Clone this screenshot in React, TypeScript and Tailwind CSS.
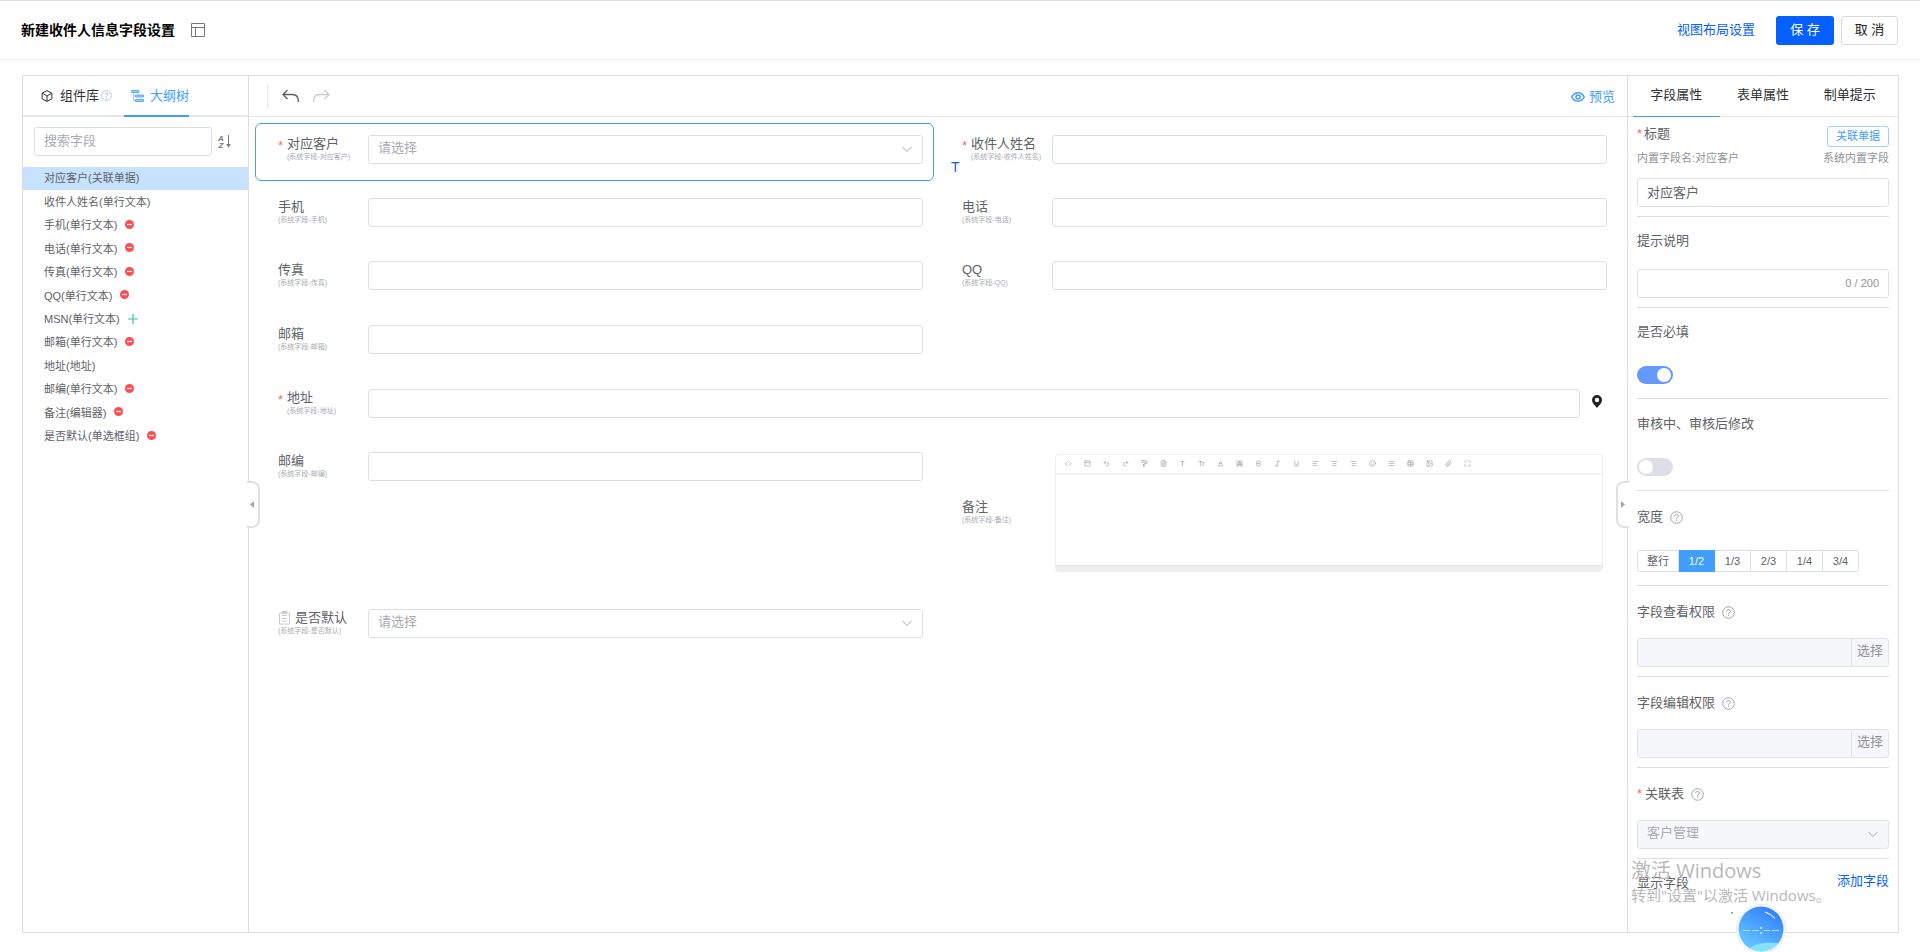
import { useState } from 'react';
import type { ReactNode } from 'react';
import {
  AlignCenter,
  AlignLeft,
  AlignRight,
  Baseline,
  Bold,
  Code,
  FileText,
  Image,
  Italic,
  Maximize,
  Menu,
  PaintRoller,
  PanelTop,
  Paperclip,
  Redo2,
  Smile,
  Table,
  Underline,
  Undo2,
} from 'lucide-react';

const treeItems = [
  { name: '对应客户(关联单据)' },
  { name: '收件人姓名(单行文本)' },
  { name: '手机(单行文本)', action: 'remove' },
  { name: '电话(单行文本)', action: 'remove' },
  { name: '传真(单行文本)', action: 'remove' },
  { name: 'QQ(单行文本)', action: 'remove' },
  { name: 'MSN(单行文本)', action: 'add' },
  { name: '邮箱(单行文本)', action: 'remove' },
  { name: '地址(地址)' },
  { name: '邮编(单行文本)', action: 'remove' },
  { name: '备注(编辑器)', action: 'remove' },
  { name: '是否默认(单选框组)', action: 'remove' },
];

const editorTools = [
  { name: '源码', Icon: Code },
  { name: '模板', Icon: PanelTop },
  { name: '撤销', Icon: Undo2 },
  { name: '重做', Icon: Redo2 },
  { name: '格式刷', Icon: PaintRoller },
  { name: '清除格式', Icon: FileText },
  { name: '字体', text: 'T' },
  { name: '字号', text: 'Tr' },
  { name: '文字颜色', Icon: Baseline },
  { name: '背景颜色', text: 'A', boxed: true },
  { name: '加粗', Icon: Bold },
  { name: '斜体', Icon: Italic },
  { name: '下划线', Icon: Underline },
  { name: '左对齐', Icon: AlignLeft },
  { name: '居中', Icon: AlignCenter },
  { name: '右对齐', Icon: AlignRight },
  { name: '表情', Icon: Smile },
  { name: '分割线', Icon: Menu },
  { name: '表格', Icon: Table },
  { name: '图片', Icon: Image },
  { name: '附件', Icon: Paperclip },
  { name: '全屏', Icon: Maximize },
];

const widths = ['整行', '1/2', '1/3', '2/3', '1/4', '3/4'];

const inputClass =
  'block h-[29px] w-full min-w-0 rounded-[3px] border border-[#dcdfe6] bg-white px-[9px] pb-[3px] text-[13px] text-[#606266] outline-none placeholder:text-[#a8abb2]';

function QuestionIcon({ className }: { className: string }) {
  return (
    <svg viewBox="0 0 14 14" className={className} fill="none" stroke="currentColor">
      <circle cx="7" cy="7" r="6.2" strokeWidth="0.9" />
      <path d="M5 5.6C5 4.4 5.9 3.8 7 3.8s2 .7 2 1.7c0 1.3-2 1.5-2 2.8" strokeWidth="1" />
      <path d="M7 9.4v1.1" strokeWidth="1.1" />
    </svg>
  );
}

function ChevronIcon() {
  return (
    <svg
      viewBox="0 0 12 12"
      className="pointer-events-none absolute top-2 right-2.5 size-3 text-[#a8abb2]"
      fill="none"
      stroke="currentColor"
    >
      <path d="M1.5 4L6 8.5L10.5 4" />
    </svg>
  );
}

function ClipboardIcon() {
  return (
    <svg viewBox="0 0 13 14" className="mr-1 h-[14px] w-[13px]" fill="none" stroke="#cccccc">
      <path d="M3.5 2H1.5v11h10V2H9.500M4 4.500h5M4 7.500h5M4 10h5" />
      <path d="M4 0.500h5v2H4z" fill="#cccccc" />
    </svg>
  );
}

type FieldProps = {
  id: string;
  label: string;
  required?: boolean;
  active?: boolean;
  wide?: boolean;
  alone?: boolean;
  center?: boolean;
  icon?: ReactNode;
  children?: ReactNode;
};

function Field({ id, label, required, active, wide, alone, center, icon, children }: FieldProps) {
  return (
    <div
      className={`relative flex rounded-md border pt-[11px] pr-[10px] pl-[22px] ${
        active ? 'border-[#409eff]' : 'border-transparent'
      } ${wide ? 'col-span-2' : ''} ${alone ? 'col-start-1' : ''} ${center ? 'items-center pb-[18px]' : 'items-start'}`}
    >
      <label htmlFor={id} className={`flex w-[90px] shrink-0 whitespace-nowrap ${center ? 'pb-0.5' : 'pt-px'}`}>
        {required && <span className="w-[9px] shrink-0 text-[13px] leading-5 text-[#f56c6c]">*</span>}
        <span>
          <span className="flex items-center text-[13px] leading-4 text-[#606266]">
            {icon}
            {label}
          </span>
          <span className="block text-[7px] leading-[10px] text-[#a8abb2]">(系统字段-{label})</span>
        </span>
      </label>
      <div className="relative flex min-w-0 flex-1">{children ?? <input id={id} type="text" className={inputClass} />}</div>
    </div>
  );
}

function SelectBox({ id }: { id: string }) {
  return (
    <>
      <select id={id} className={`${inputClass} appearance-none text-[#a8abb2]`}>
        <option>请选择</option>
      </select>
      <ChevronIcon />
    </>
  );
}

function Editor({ id }: { id: string }) {
  return (
    <div className="mr-1 ml-[3px] flex h-[118px] flex-1 flex-col rounded-sm border border-[#eeeeee]">
      <div className="flex h-5 items-center border-b-2 border-[#f3f3f3] pl-[3px]">
        {editorTools.map(({ name, Icon, text, boxed }) => (
          <button
            key={name}
            type="button"
            aria-label={name}
            className="flex w-[19px] justify-center text-[7px] leading-[7px] text-[#999999]"
          >
            {Icon && <Icon className="size-[7px]" strokeWidth={2} />}
            {text && <span className={boxed ? 'bg-[#e4e4e4] px-px' : ''}>{text}</span>}
          </button>
        ))}
      </div>
      <textarea id={id} className="block w-full flex-1 resize-none outline-none" />
      <div className="h-[6px] border-t border-[#e6e6e6] bg-[#eeeeee]" />
    </div>
  );
}

type SectionProps = {
  label: string;
  htmlFor?: string;
  required?: boolean;
  help?: boolean;
  tall?: boolean;
  children: ReactNode;
};

function Section({ label, htmlFor, required, help, tall, children }: SectionProps) {
  return (
    <div className="border-b border-[#dddddd] pb-[9px]">
      <div className={`flex items-center ${help ? 'h-[52px]' : tall ? 'mb-[3px] h-[50px]' : 'mb-1 h-12'}`}>
        {required && <span className="w-2 text-[13px] text-[#f56c6c]">*</span>}
        <label htmlFor={htmlFor} className="text-[13px] text-[#606266]">
          {label}
        </label>
        {help && <QuestionIcon className="ml-[7px] size-[13px] text-[#909399]" />}
      </div>
      <div className="flex min-h-[29px] items-center">{children}</div>
    </div>
  );
}

function Switch({ id, initial }: { id: string; initial: boolean }) {
  const [on, setOn] = useState(initial);
  return (
    <input
      id={id}
      type="checkbox"
      role="switch"
      checked={on}
      onChange={(e) => setOn(e.target.checked)}
      className="flex h-[18px] w-9 appearance-none items-center rounded-full bg-[#dcdfe6] px-0.5 before:size-[14px] before:rounded-full before:bg-white checked:justify-end checked:bg-[#6699ff]"
    />
  );
}

function PermissionInput({ id }: { id: string }) {
  return (
    <div className="flex h-[29px] w-full rounded-[3px] border border-[#e0e3ea] bg-[#f5f7fa]">
      <input id={id} type="text" disabled className="min-w-0 flex-1 px-2 text-[13px]" />
      <button type="button" className="border-l border-[#dcdfe6] px-[5px] pb-[3px] text-[13px] text-[#909399]">
        选择
      </button>
    </div>
  );
}

function Header() {
  return (
    <header className="flex h-[60px] shrink-0 items-center border-t border-b border-t-[#dddddd] border-b-[#eeeeee] pr-[22px] pl-[21px]">
      <h1 className="text-[14px] font-bold text-black">新建收件人信息字段设置</h1>
      <svg viewBox="0 0 14 14" className="ml-4 size-[14px]" fill="none" stroke="#777777">
        <path d="M0.5 0.5h13v13h-13zM0.5 4.5h13M4.5 4.5v9" />
      </svg>
      <a href="#layout" className="ml-auto text-[13px] text-[#0560ff]">
        视图布局设置
      </a>
      <button type="button" className="ml-[21px] h-[29px] w-[58px] rounded-[3px] bg-[#0560ff] text-[13px] text-white">
        保 存
      </button>
      <button type="button" className="ml-[7px] h-[29px] w-[57px] rounded-[3px] border border-[#d9d9d9] text-[13px] text-[#222222]">
        取 消
      </button>
    </header>
  );
}

function Outline() {
  const [selected, setSelected] = useState(0);
  return (
    <aside className="relative w-[226px] shrink-0 border-r border-[#dddddd]">
      <div className="flex h-[41px] border-b-2 border-[#e4e7ed] pl-[18px] text-[13px]">
        <button type="button" className="flex items-center text-[#303133]">
          <svg viewBox="0 0 12 12" className="mr-[7px] size-3" fill="none" stroke="currentColor">
            <path d="M6 0.6L10.9 3.2v5.6L6 11.4L1.1 8.8V3.2zM1.1 3.2L6 6l4.9-2.8M6 6v5.4" />
          </svg>
          组件库
          <QuestionIcon className="ml-0.5 size-[11px] text-[#a8abb2]" />
        </button>
        <button type="button" className="-mb-0.5 ml-3 flex items-center border-b-2 border-[#409eff] pl-[7px] text-[#409eff]">
          <svg viewBox="0 0 13 12" className="mr-[6px] h-3 w-[13px]" fill="none" stroke="currentColor" strokeWidth="0.8">
            <path d="M0.5 0.5h7.5v2H0.5zM4.5 5h8v2h-8zM4.5 9.5h8v2h-8z" fill="#a0cfff" />
            <path d="M2.5 2.500v8h2M2.5 6h2" strokeWidth="0.500" />
          </svg>
          大纲树
        </button>
      </div>
      <div className="flex items-center gap-1.5 pt-[10px] pb-[11px] pl-[11px]">
        <input type="text" aria-label="搜索字段" placeholder="搜索字段" className={`${inputClass} max-w-[178px]`} />
        <button type="button" aria-label="排序" className="flex items-center gap-0.5 text-[#777777]">
          <span className="text-[8px] leading-[7px] font-bold italic">
            A<br />Z
          </span>
          <svg viewBox="0 0 5 13" className="h-[13px] w-[5px]" fill="none" stroke="currentColor">
            <path d="M2.5 0v12" />
            <path d="M0.200 9h4.600L2.5 12.800z" fill="currentColor" stroke="none" />
          </svg>
        </button>
      </div>
      <ul className="grid h-[281px] auto-rows-fr">
        {treeItems.map((item, index) => (
          <li
            key={item.name}
            className={`flex items-center gap-2 pl-[21px] text-[11px] text-[#606266] ${index === selected ? 'bg-[#c6e2ff]' : ''}`}
          >
            <button type="button" onClick={() => setSelected(index)}>
              {item.name}
            </button>
            {item.action === 'remove' && (
              <button type="button" aria-label="移除" className="pb-0.5">
                <svg viewBox="0 0 9 9" className="block size-[9px]">
                  <circle cx="4.5" cy="4.5" r="4.5" fill="#ff4d4f" />
                  <path d="M2 4.5h5" stroke="white" strokeWidth="1.2" />
                </svg>
              </button>
            )}
            {item.action === 'add' && (
              <button type="button" aria-label="添加">
                <svg viewBox="0 0 10 10" className="size-[10px]" stroke="#3ec48f" strokeWidth="1.2">
                  <path d="M5 0v10M0 5h10" />
                </svg>
              </button>
            )}
          </li>
        ))}
      </ul>
      <button
        type="button"
        aria-label="收起左侧"
        className="absolute top-[405px] -right-3 z-10 flex h-[47px] w-[13px] items-center rounded-r-lg border-2 border-l-0 border-[#e0e0e0] bg-white pl-[3px]"
      >
        <svg viewBox="0 0 4 7" className="h-[7px] w-1" fill="#a0a4b0">
          <path d="M4 0v7L0 3.5z" />
        </svg>
      </button>
    </aside>
  );
}

function Canvas() {
  return (
    <section className="min-w-0 flex-1">
      <div className="flex h-[41px] items-center border-b border-[#e4e7ed] pr-3 pl-[18px]">
        <span className="mr-[14px] h-[23px] w-px bg-[#e8e8e8]" />
        <button type="button" aria-label="撤销" className="mr-3 text-[#606266]">
          <svg viewBox="0 0 18 14" className="h-[14px] w-[18px]" fill="none" stroke="currentColor" strokeWidth="1.4">
            <path d="M5.5 1L1 5.5L5.5 10M1 5.5h9.5c4 0 6 2.5 6 7.5" />
          </svg>
        </button>
        <button type="button" aria-label="重做" className="text-[#cccccc]">
          <svg viewBox="0 0 18 14" className="h-[14px] w-[18px]" fill="none" stroke="currentColor" strokeWidth="1.4">
            <path d="M12.5 1L17 5.5L12.5 10M17 5.5H7.5c-4 0-6 2.5-6 7.5" />
          </svg>
        </button>
        <button type="button" className="ml-auto flex items-center gap-1 pt-0.5 text-[13px] text-[#409eff]">
          <svg viewBox="0 0 14 10" className="h-[10px] w-[14px]" fill="none" stroke="currentColor" strokeWidth="1.6">
            <path d="M0.8 5C2.2 2.2 4.4 0.8 7 0.8S11.8 2.2 13.2 5C11.8 7.8 9.6 9.2 7 9.2S2.2 7.8 0.8 5z" />
            <circle cx="7" cy="5" r="2" />
          </svg>
          预览
        </button>
      </div>
      <form className="grid grid-cols-2 grid-rows-[58px_58px_59px_59px_58px_152px_58px] gap-[5px] pt-[6px] pr-[9px] pl-[6px]">
        <Field id="customer" label="对应客户" required active>
          <SelectBox id="customer" />
        </Field>
        <Field id="receiver" label="收件人姓名" required>
          <input id="receiver" type="text" className={inputClass} />
          <span className="absolute top-[23px] -left-[101px] text-[14px] leading-[18px] text-[#0560ff]">T</span>
        </Field>
        <Field id="mobile" label="手机" />
        <Field id="phone" label="电话" />
        <Field id="fax" label="传真" />
        <Field id="qq" label="QQ" />
        <Field id="email" label="邮箱" />
        <Field id="address" label="地址" required wide>
          <input id="address" type="text" className={inputClass} />
          <button type="button" aria-label="定位" className="w-[27px] shrink-0 pb-1 pl-[12px]">
            <svg viewBox="0 0 10 13" className="h-[13px] w-[10px]" fill="#222222" fillRule="evenodd">
              <path d="M5 0a5 5 0 0 1 5 5c0 3-3 5.5-5 8C3 10.5 0 8 0 5a5 5 0 0 1 5-5zM5 2.8a2.2 2.2 0 1 0 0 4.4a2.2 2.2 0 1 0 0-4.4z" />
            </svg>
          </button>
        </Field>
        <Field id="zip" label="邮编" />
        <Field id="remark" label="备注" center>
          <Editor id="remark" />
        </Field>
        <Field id="isDefault" label="是否默认" alone icon={<ClipboardIcon />}>
          <SelectBox id="isDefault" />
        </Field>
      </form>
    </section>
  );
}

function Properties() {
  const [tab, setTab] = useState('字段属性');
  const [width, setWidth] = useState('1/2');
  return (
    <aside className="relative w-[271px] shrink-0 border-l border-[#dddddd]">
      <div className="flex h-[41px] border-b border-[#e4e7ed] px-[5px]">
        {['字段属性', '表单属性', '制单提示'].map((name) => (
          <button
            key={name}
            type="button"
            onClick={() => setTab(name)}
            className={`-mb-px flex-1 border-b pb-0.5 text-[13px] text-[#303133] ${tab === name ? 'border-[#409eff]' : 'border-transparent'}`}
          >
            {name}
          </button>
        ))}
      </div>
      <div className="px-[9px]">
        <div className="border-b border-[#dddddd] pt-[9px] pb-[9px]">
          <div className="flex h-5 items-start justify-between">
            <label htmlFor="title" className="text-[13px] leading-4 text-[#606266]">
              <span className="mr-0.5 text-[#f56c6c]">*</span>
              标题
            </label>
            <button type="button" className="h-[21px] rounded-[3px] border border-[#a0cfff] px-2 text-[11px] text-[#409eff]">
              关联单据
            </button>
          </div>
          <div className="mt-1 mb-3 flex h-4 items-center justify-between text-[11px] text-[#909399]">
            <span>内置字段名:对应客户</span>
            <span>系统内置字段</span>
          </div>
          <input id="title" type="text" defaultValue="对应客户" className={inputClass} />
        </div>
        <Section label="提示说明" htmlFor="tip">
          <div className="flex h-[29px] w-full items-center rounded-[3px] border border-[#dcdfe6] pr-[9px]">
            <input id="tip" type="text" className="min-w-0 flex-1 px-2 text-[13px] outline-none" />
            <span className="text-[11px] text-[#909399]">0 / 200</span>
          </div>
        </Section>
        <Section label="是否必填" htmlFor="required">
          <Switch id="required" initial />
        </Section>
        <Section label="审核中、审核后修改" htmlFor="audit" tall>
          <Switch id="audit" initial={false} />
        </Section>
        <Section label="宽度" help>
          <div className="mt-[7px] mb-1 flex h-[22px] text-[11px] text-[#606266]">
            {widths.map((item) => (
              <label
                key={item}
                className={`flex w-9 items-center justify-center border-y border-r first:w-[42px] first:rounded-l-[3px] first:border-l last:rounded-r-[3px] ${
                  width === item ? 'border-[#409eff] bg-[#409eff] text-white' : 'border-[#dcdfe6]'
                }`}
              >
                <input
                  type="radio"
                  name="width"
                  checked={width === item}
                  onChange={() => setWidth(item)}
                  className="sr-only"
                />
                {item}
              </label>
            ))}
          </div>
        </Section>
        <Section label="字段查看权限" htmlFor="viewAuth" help>
          <PermissionInput id="viewAuth" />
        </Section>
        <Section label="字段编辑权限" htmlFor="editAuth" help>
          <PermissionInput id="editAuth" />
        </Section>
        <Section label="关联表" htmlFor="relation" required help>
          <div className="relative w-full">
            <select
              id="relation"
              disabled
              className="block h-[29px] w-full appearance-none rounded-[3px] border border-[#e0e3ea] bg-[#f5f7fa] px-[9px] pb-[3px] text-[13px] text-[#a8abb2] opacity-100"
            >
              <option>客户管理</option>
            </select>
            <ChevronIcon />
          </div>
        </Section>
        <div className="flex h-12 items-center justify-between text-[13px]">
          <span className="text-[#606266]">显示字段</span>
          <a href="#add" className="pb-1 text-[#0560ff]">
            添加字段
          </a>
        </div>
      </div>
      <button
        type="button"
        aria-label="收起右侧"
        className="absolute top-[405px] -left-3 z-10 flex h-[47px] w-[13px] items-center rounded-l-lg border-2 border-r-0 border-[#e0e0e0] bg-white pl-[3px]"
      >
        <svg viewBox="0 0 4 7" className="h-[7px] w-1" fill="#a0a4b0">
          <path d="M0 0v7l4-3.5z" />
        </svg>
      </button>
    </aside>
  );
}

export default function App() {
  return (
    <div className="relative flex min-h-screen flex-col overflow-hidden bg-white font-['Liberation_Sans','Noto_Sans_CJK_SC',sans-serif]">
      <Header />
      <main className="mt-[15px] mr-[21px] mb-[19px] ml-[22px] flex flex-1 border border-[#dddddd]">
        <Outline />
        <Canvas />
        <Properties />
      </main>

      <div className="pointer-events-none absolute right-[94px] bottom-[45px] w-[195px] font-['Open_Sans','Noto_Sans_CJK_SC',sans-serif] whitespace-nowrap text-[#b8b8b8]">
        <p className="text-[20px] leading-6">激活 Windows</p>
        <p className="text-[15px] leading-6">转到"设置"以激活 Windows。</p>
      </div>

      {/* 悬浮计时球 */}
      <svg viewBox="0 0 60 50" className="absolute right-[134px] -bottom-0.5 h-[50px] w-[60px]">
        <defs>
          <linearGradient id="ball" x1="0.8" y1="0" x2="0.2" y2="1">
            <stop offset="0" stopColor="#2e7dff" />
            <stop offset="1" stopColor="#6bcbff" />
          </linearGradient>
          <clipPath id="ballClip">
            <circle cx="35" cy="25" r="22.5" />
          </clipPath>
        </defs>
        <path d="M5 8h2v1.5H5z" fill="#999999" />
        <circle cx="35" cy="25" r="24.5" fill="white" stroke="#dfe9f5" />
        <circle cx="35" cy="25" r="22.5" fill="url(#ball)" />
        <path d="M20 48c6-9 18-10 32-9v11H20z" fill="#86e0ff" clipPath="url(#ballClip)" />
        <path d="M39 8q6 1.500 10 6.500q-4-4-10-6.500z" fill="white" stroke="white" strokeOpacity="0.6" />
        <path d="M17 26.5h7M26 26.5h7M38 26.5h6M46 26.5h7" stroke="#b5dbff" />
        <path d="M34 23h2v2h-2zM34 28h2v2h-2z" fill="#b5dbff" />
      </svg>
    </div>
  );
}
